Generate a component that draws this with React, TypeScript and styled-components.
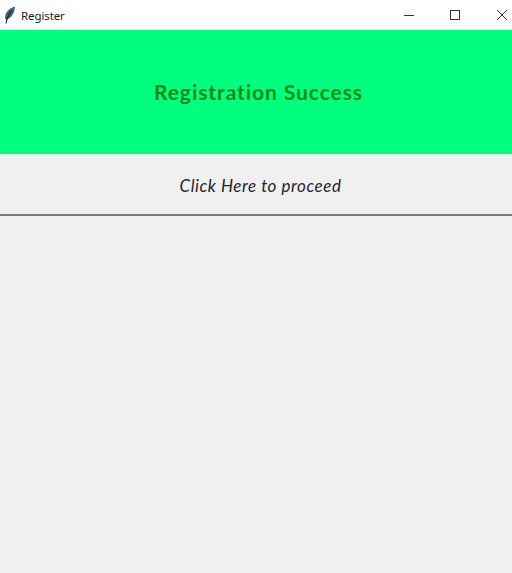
import React from "react";
import styled, { createGlobalStyle } from "styled-components";

const Global = createGlobalStyle`
  html, body { margin: 0; padding: 0; background: #f0f0f0; }
`;

const Window = styled.div`
  width: 512px;
  height: 573px;
  display: flex;
  flex-direction: column;
  background: #f0f0f0;
  overflow: hidden;
`;

const TitleBar = styled.div`
  height: 30px;
  flex: none;
  display: flex;
  align-items: center;
  background: #ffffff;
  padding-left: 4px;
`;

const AppIcon = styled.svg`
  width: 12px;
  height: 18px;
  margin-right: 5px;
`;

const Title = styled.span`
  font: 11.5px "Noto Sans", "Liberation Sans", sans-serif;
  letter-spacing: -0.1px;
  color: #1a1a1a;
  flex: 1;
`;

const WindowControls = styled.div`
  display: flex;
  align-items: center;
  height: 100%;
  margin-right: -16px;
`;

const ControlIcon = styled.svg`
  width: 46px;
  height: 30px;
  display: block;
  flex: none;
  stroke: #333;
  fill: none;
  stroke-width: 1;
`;

const Banner = styled.div`
  height: 124px;
  flex: none;
  display: flex;
  align-items: center;
  justify-content: center;
  background: #00ff7f;
  border-bottom: 1px solid #dfe9e2;
  box-sizing: content-box;
`;

const BannerText = styled.h1`
  margin: 0 0 1px 5px;
  font: 700 21px "Lato", "Open Sans", sans-serif;
  letter-spacing: 0.92px;
  color: #0b8a13;
`;

const ProceedLink = styled.div`
  height: 59px;
  flex: none;
  display: flex;
  align-items: center;
  justify-content: center;
  border-bottom: 2px solid #7d7d7d;
`;

const ProceedText = styled.span`
  margin: 2px 0 0 9px;
  font: italic 400 17px "Lato", "Open Sans", sans-serif;
  letter-spacing: 0.55px;
  color: #262626;
`;

export default function App() {
  return (
    <Window>
      <Global />
      <TitleBar>
        <AppIcon viewBox="0 0 12 18">
          <path d="M11 .8C7 1.200 2 5 1.200 10c-.3 1.600 0 3 .8 3.800C7 13 10.800 7 11 .8z" fill="#4a6074" />
          <path d="M8 4.500C5 7.500 3 12 2 17.500" stroke="#1f2a35" strokeWidth="1.200" fill="none" />
        </AppIcon>
        <Title>Register</Title>
        <WindowControls>
          <ControlIcon viewBox="0 0 46 30">
            <path d="M14 15.500h10" />
          </ControlIcon>
          <ControlIcon viewBox="0 0 46 30">
            <rect x="14.500" y="10.500" width="9" height="9" />
          </ControlIcon>
          <ControlIcon viewBox="0 0 46 30">
            <path d="M15 10l10 10M25 10L15 20" />
          </ControlIcon>
        </WindowControls>
      </TitleBar>
      <Banner>
        <BannerText>Registration Success</BannerText>
      </Banner>
      <ProceedLink>
        <ProceedText>Click Here to proceed</ProceedText>
      </ProceedLink>
    </Window>
  );
}
